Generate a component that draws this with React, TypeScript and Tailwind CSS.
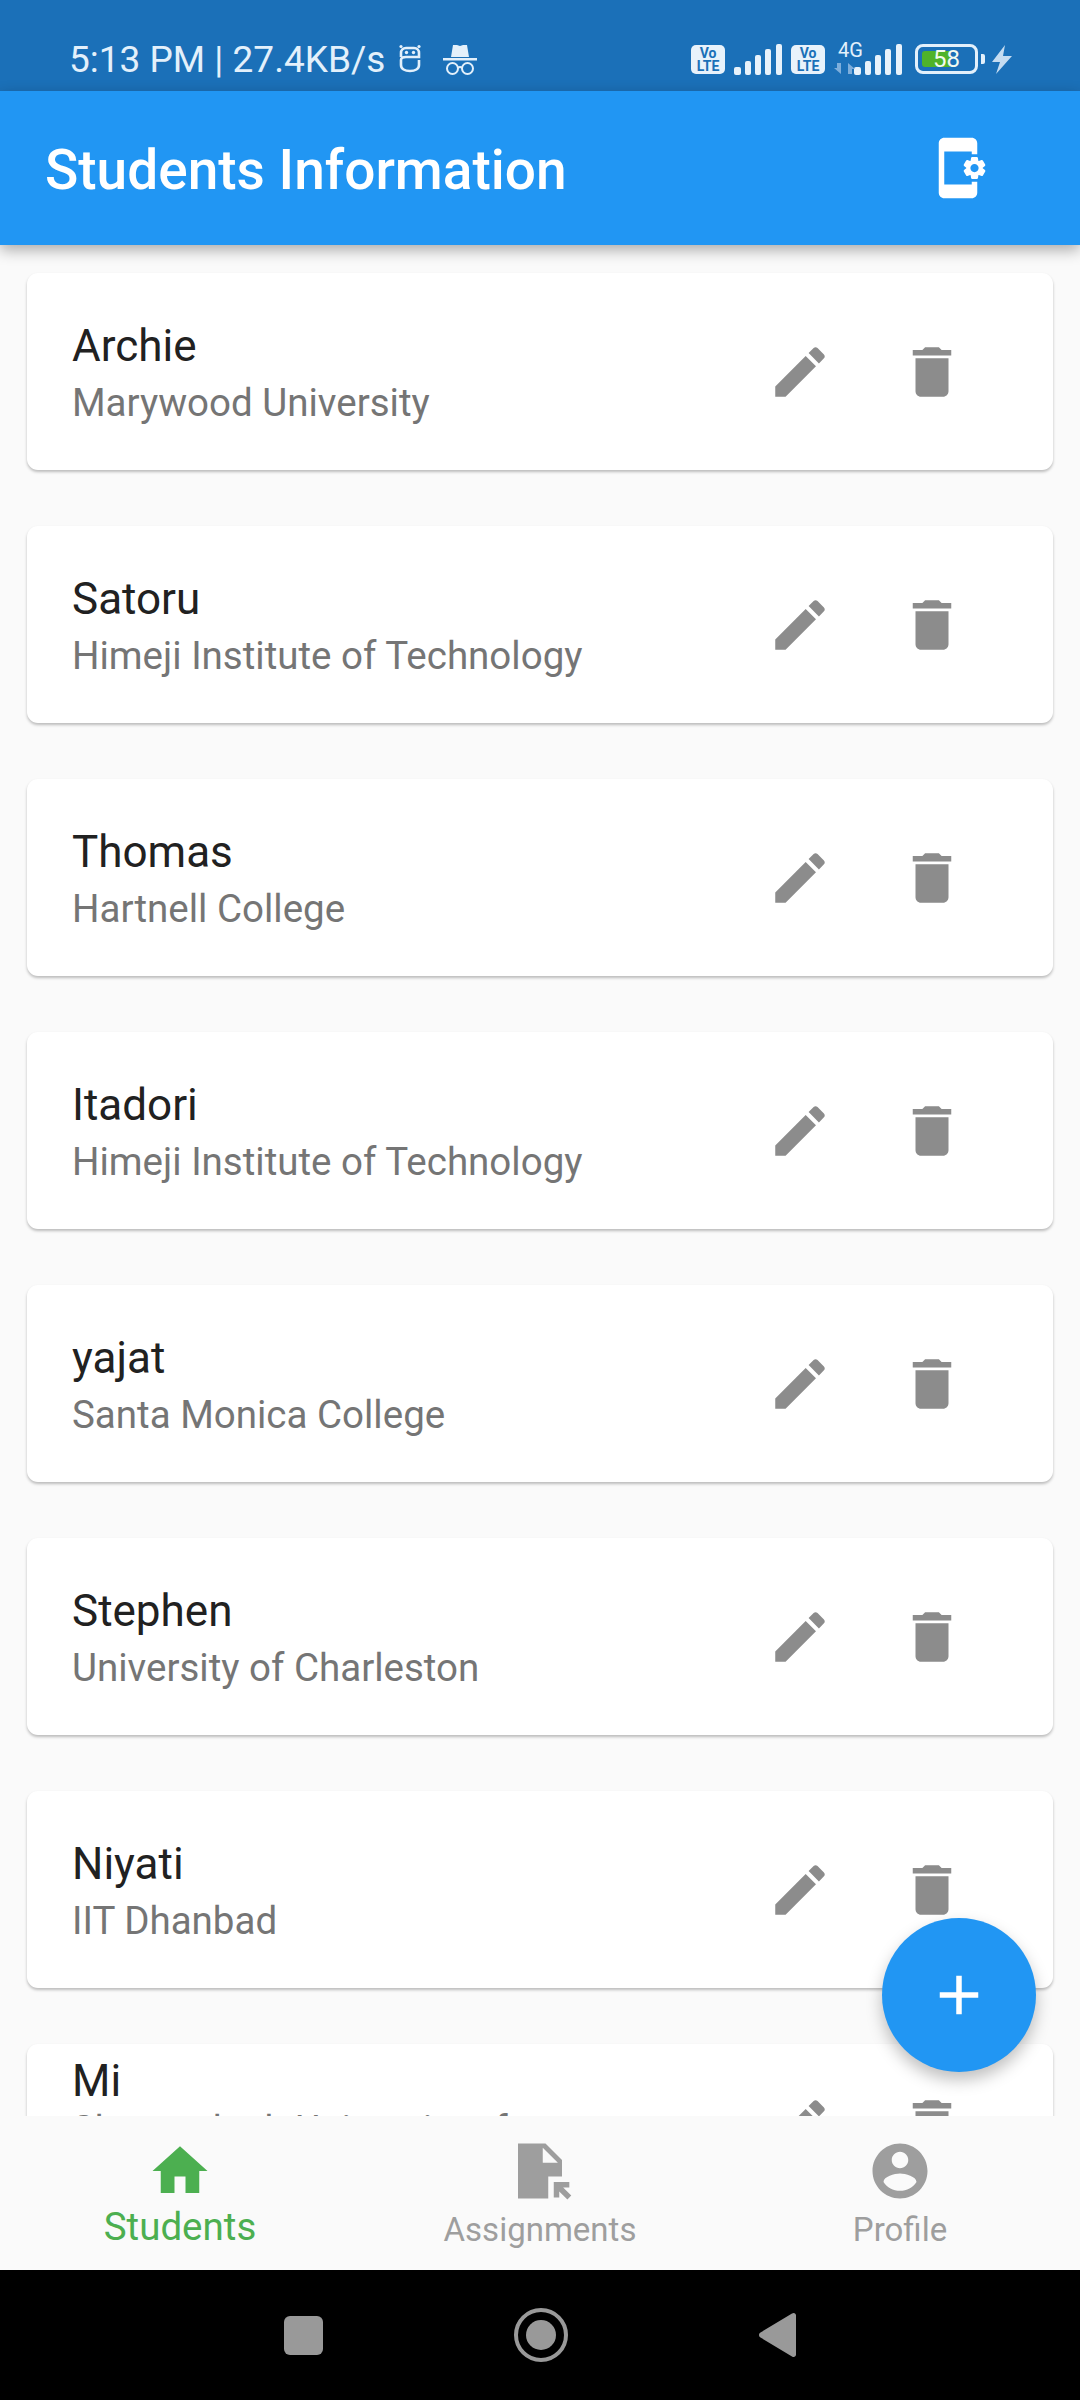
const students = [
  { name: 'Archie', school: 'Marywood University' },
  { name: 'Satoru', school: 'Himeji Institute of Technology' },
  { name: 'Thomas', school: 'Hartnell College' },
  { name: 'Itadori', school: 'Himeji Institute of Technology' },
  { name: 'yajat', school: 'Santa Monica College' },
  { name: 'Stephen', school: 'University of Charleston' },
  { name: 'Niyati', school: 'IIT Dhanbad' },
]

const Signal = ({ className }: { className: string }) => (
  <svg viewBox="0 0 48 31" className={className} fill="#e8f2fb">
    <rect x="0" y="23" width="7" height="8" rx="2" />
    <rect x="11" y="17" width="6" height="14" rx="2" />
    <rect x="21" y="11" width="6" height="20" rx="2" />
    <rect x="31" y="5" width="6" height="26" rx="2" />
    <rect x="42" y="0" width="6" height="31" rx="2" />
  </svg>
)

const VoLte = ({ className }: { className: string }) => (
  <div
    className={`flex h-[29px] w-[34px] flex-col items-center justify-center rounded-[5px] bg-[#e8f2fb] text-[14px] leading-[13px] font-bold text-[#1b70b8] ${className}`}
  >
    <span>Vo</span>
    <span>LTE</span>
  </div>
)

const StatusBar = () => (
  <div className="flex h-[91px] shrink-0 items-start bg-[#1b70b8] pt-[38px] text-[#e3f0fb]">
    <span className="ml-[69px] w-[315px] text-[37px] leading-[44px] whitespace-nowrap">
      5:13 PM | 27.4KB/s
    </span>
    <svg
      viewBox="0 0 24 29"
      className="mt-[6px] ml-[14px] h-[29px] w-[24px]"
      fill="none"
      stroke="#e3f0fb"
      strokeWidth="2.6"
    >
      <path d="M3 13V9c0-3 2-5 5-5h8c3 0 5 2 5 5v4H8c-3 0-5 1-5 3v5c0 4 4 6 9 6s9-2 9-6v-5" />
      <circle cx="3" cy="2.500" r="1.600" fill="#e3f0fb" stroke="none" />
      <circle cx="21" cy="2.500" r="1.600" fill="#e3f0fb" stroke="none" />
      <circle cx="8.500" cy="8.500" r="1.700" fill="#e3f0fb" stroke="none" />
      <circle cx="15.500" cy="8.500" r="1.700" fill="#e3f0fb" stroke="none" />
    </svg>
    <svg viewBox="0 0 34 31" className="mt-[6px] ml-[21px] h-[31px] w-[34px]" fill="#e3f0fb">
      <path d="M8 13 10 1h4l3 1 3-1h4l2 12z" />
      <rect x="0" y="14" width="34" height="2.500" />
      <g fill="none" stroke="#e3f0fb" strokeWidth="2">
        <circle cx="9.500" cy="24.500" r="5.500" />
        <circle cx="24.500" cy="24.500" r="5.500" />
        <path d="M15 24c1-1.200 3-1.200 4 0" />
      </g>
    </svg>

    <VoLte className="mt-[7px] ml-[214px]" />
    <Signal className="mt-[6px] ml-[9px] h-[31px] w-[48px]" />
    <VoLte className="mt-[7px] ml-[9px]" />
    <div className="relative ml-[9px] h-[36px] w-[22px]">
      <span className="absolute top-[3px] left-[4px] text-[20px] leading-[19px]">4G</span>
      <svg viewBox="0 0 22 11" className="absolute top-[25px] left-0 h-[11px] w-[22px]" fill="#7eaedb">
        <path d="M0 5h3V0h4v11zM21 6h-3v5h-4V0z" />
      </svg>
    </div>
    <Signal className="mt-[6px] -ml-[2px] h-[31px] w-[48px]" />
    <div className="relative mt-[6px] ml-[13px] flex h-[30px] w-[63px] items-center justify-center rounded-[8px] border-[3px] border-[#e3f0fb]">
      <div className="absolute top-[4px] bottom-[4px] left-[4px] w-[28px] rounded-l-[3px] bg-[#4fb32a]" />
      <span className="relative text-[24px] leading-[24px] text-[#f2fbf0]">58</span>
    </div>
    <div className="mt-[16px] ml-[3px] h-[10px] w-[4px] rounded-r-[2px] bg-[#e3f0fb]" />
    <svg viewBox="0 0 20 29" className="mt-[7px] ml-[7px] h-[29px] w-[20px]" fill="#c5dcf1">
      <path d="M13 0 0 17h8L4 29 20 11h-9z" />
    </svg>
  </div>
)

const AppBar = () => (
  <header className="relative z-10 flex h-[154px] shrink-0 items-center justify-between bg-[#2196f3] pr-[89px] pl-[45px] shadow-[0_5px_14px_rgba(0,0,0,0.32)]">
    <h1 className="pt-[3px] text-[55px] leading-[64px] font-medium text-white">Students Information</h1>
    <svg viewBox="0 0 24 24" className="h-[66px] w-[66px]" fill="white">
      <path d="M21.81 12.74l-.82-.63v-.22l.8-.63c.16-.12.2-.34.1-.51l-.85-1.48c-.07-.13-.21-.2-.35-.2-.05 0-.1.01-.15.03l-.95.38c-.08-.05-.11-.07-.19-.11l-.15-1.01c-.03-.21-.2-.36-.4-.36h-1.71c-.2 0-.37.15-.4.34l-.14 1.01c-.03.02-.07.03-.1.05l-.09.06-.95-.38c-.05-.02-.1-.03-.15-.03-.14 0-.27.07-.35.2l-.85 1.48c-.1.17-.06.39.1.51l.8.63v.23l-.8.63c-.16.12-.2.34-.1.51l.85 1.48c.07.13.21.2.35.2.05 0 .1-.01.15-.03l.95-.37c.08.05.12.07.2.11l.15 1.01c.03.2.2.34.4.34h1.71c.2 0 .37-.15.4-.34l.15-1.01c.03-.02.07-.03.1-.05l.09-.06.95.38c.05.02.1.03.15.03.14 0 .27-.07.35-.2l.85-1.48c.1-.17.06-.39-.1-.51zM18 13.5c-.83 0-1.5-.67-1.5-1.5s.67-1.5 1.5-1.5 1.5.67 1.5 1.5-.67 1.5-1.5 1.5zM17 18H7V6h10v1h2V3c0-1.100-.9-2-2-2H7c-1.100 0-2 .9-2 2v18c0 1.100.9 2 2 2h10c1.100 0 2-.9 2-2v-4h-2v1z" />
    </svg>
  </header>
)

const CardIcons = ({ className }: { className?: string }) => (
  <>
    <svg viewBox="0 0 24 24" className={`h-[66px] w-[66px] shrink-0 ${className ?? ''}`} fill="#8c8c8c">
      <path d="M3 17.250V21h3.750L17.810 9.940l-3.750-3.750L3 17.250zM20.710 7.040c.39-.39.39-1.020 0-1.410l-2.340-2.340c-.39-.39-1.020-.39-1.410 0l-1.830 1.830 3.750 3.750 1.830-1.830z" />
    </svg>
    <svg viewBox="0 0 24 24" className={`ml-[66px] h-[66px] w-[66px] shrink-0 ${className ?? ''}`} fill="#8c8c8c">
      <path d="M6 19c0 1.100.9 2 2 2h8c1.100 0 2-.9 2-2V7H6v12zM19 4h-3.500l-1-1h-5l-1 1H5v2h14V4z" />
    </svg>
  </>
)

const StudentCard = ({ name, school }: { name: string; school: string }) => (
  <div className="flex h-[197px] shrink-0 items-center rounded-[11px] bg-white pr-[88px] pl-[45px] shadow-[0_2px_3px_rgba(0,0,0,0.25)]">
    <div className="min-w-0 flex-1 pt-[5px]">
      <div className="text-[44px] leading-[55px] text-[#212121]">{name}</div>
      <div className="mt-[1px] text-[38.500px] leading-[55px] text-[#757575]">{school}</div>
    </div>
    <CardIcons />
  </div>
)

// long school name wraps, so the tile top-aligns its content
const WrappedCard = ({ name, school }: { name: string; school: string }) => (
  <div className="flex h-[197px] shrink-0 items-start rounded-[11px] bg-white pr-[88px] pl-[45px] shadow-[0_2px_3px_rgba(0,0,0,0.25)]">
    <div className="min-w-0 flex-1 pt-[11px]">
      <div className="text-[44px] leading-[52px] text-[#212121]">{name}</div>
      <div className="w-[440px] text-[38.500px] leading-[45px] text-[#757575]">{school}</div>
    </div>
    <CardIcons className="mt-[48px]" />
  </div>
)

const BottomNav = () => (
  <nav className="relative z-10 grid h-[154px] shrink-0 grid-cols-3 bg-[#fafafa]">
    <div className="flex flex-col items-center pt-[22px] text-[#4caf50]">
      <svg viewBox="0 0 24 24" className="h-[66px] w-[66px]" fill="currentColor">
        <path d="M10 20v-6h4v6h5v-8h3L12 3 2 12h3v8z" />
      </svg>
      <span className="text-[38.500px] leading-[45px]">Students</span>
    </div>
    <div className="flex flex-col items-center pt-[22px] text-[#9e9e9e]">
      <svg viewBox="0 0 24 24" className="h-[66px] w-[66px]" fill="currentColor" fillRule="evenodd">
        <path d="M14 2H4v20h11v-8h5V8l-6-6zM13 9V3.500L18.500 9H13zM17 21.660V16h5.660v2h-2.240l2.950 2.950-1.410 1.410L19 19.410v2.250z" />
      </svg>
      <span className="mt-[6px] text-[33px] leading-[39px]">Assignments</span>
    </div>
    <div className="flex flex-col items-center pt-[22px] text-[#9e9e9e]">
      <svg viewBox="0 0 24 24" className="h-[66px] w-[66px]" fill="currentColor">
        <path d="M12 2C6.480 2 2 6.480 2 12s4.480 10 10 10 10-4.480 10-10S17.520 2 12 2zm0 3c1.660 0 3 1.340 3 3s-1.340 3-3 3-3-1.340-3-3 1.340-3 3-3zm0 14.200c-2.500 0-4.710-1.280-6-3.220.03-1.990 4-3.080 6-3.080 1.990 0 5.970 1.090 6 3.080-1.290 1.940-3.500 3.220-6 3.220z" />
      </svg>
      <span className="mt-[6px] text-[33px] leading-[39px]">Profile</span>
    </div>
  </nav>
)

const SystemNav = () => (
  <div className="flex h-[130px] shrink-0 items-center justify-center gap-[191px] bg-black">
    <div className="h-[39px] w-[39px] rounded-[6px] bg-[#999999]" />
    <div className="flex h-[54px] w-[54px] items-center justify-center rounded-full border-[4px] border-[#999999]">
      <div className="h-[30px] w-[30px] rounded-full bg-[#999999]" />
    </div>
    <svg viewBox="0 0 37 46" className="h-[46px] w-[37px]" fill="#999999">
      <path d="M33 1.500c2-1.400 4 0 4 2v39c0 2-2 3.400-4 2L1.500 25.500c-2-1.200-2-3.800 0-5z" />
    </svg>
  </div>
)

export default function App() {
  return (
    <div className="relative flex h-[2400px] w-[1080px] flex-col overflow-hidden bg-[#fafafa] font-['Roboto',sans-serif]">
      <StatusBar />
      <AppBar />
      <main className="flex min-h-0 flex-1 flex-col gap-[56px] overflow-hidden px-[27px] pt-[28px]">
        {students.map((s) => (
          <StudentCard key={s.name} name={s.name} school={s.school} />
        ))}
        <WrappedCard name="Mi" school="Shenandoah University of Health Sciences" />
      </main>
      <BottomNav />
      <SystemNav />
      <button className="absolute top-[1918px] left-[882px] z-20 flex h-[154px] w-[154px] items-center justify-center rounded-full bg-[#2196f3] shadow-[0_8px_16px_rgba(0,0,0,0.25)]">
        <svg viewBox="0 0 24 24" className="h-[66px] w-[66px]" fill="white">
          <path d="M19 13h-6v6h-2v-6H5v-2h6V5h2v6h6v2z" />
        </svg>
      </button>
    </div>
  )
}
